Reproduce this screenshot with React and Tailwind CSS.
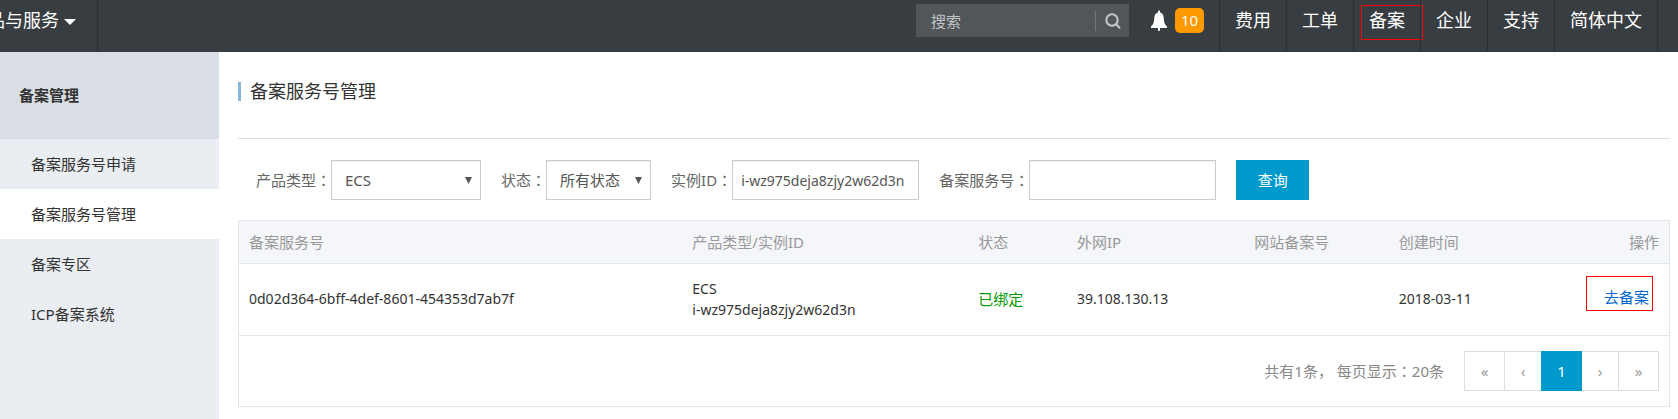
const NAV_ITEMS = ['费用', '工单', '备案', '企业', '支持', '简体中文'];
const SIDE_ITEMS = ['备案服务号申请', '备案服务号管理', '备案专区', 'ICP备案系统'];
const ACTIVE_ITEM = '备案服务号管理';

const RECORDS = [
  {
    id: '0d02d364-6bff-4def-8601-454353d7ab7f',
    product: 'ECS',
    instance: 'i-wz975deja8zjy2w62d3n',
    status: '已绑定',
    ip: '39.108.130.13',
    site: '',
    created: '2018-03-11',
  },
];

// the full-width colon sits in the middle of its cell in the TC face
function Colon() {
  return <span className="font-['Noto_Sans_CJK_TC',sans-serif]">：</span>;
}

function BellIcon() {
  return (
    <svg width="16" height="21" viewBox="0 0 16 21" fill="#fff" aria-hidden="true">
      <path d="M8 0.5c.8 0 1.100.6 1.100 1.400v.5C11.300 3 12.500 4.800 12.700 7.600c.3 4.600.8 6.800 3.300 8.900V18H0v-1.500c2.500-2.100 3-4.300 3.300-8.900C3.500 4.800 4.700 3 6.900 2.400v-.5C6.900 1.100 7.200.5 8 .5z" />
      <path d="M7 18h2v2c0 .5-.4 1-1 1s-1-.5-1-1z" />
    </svg>
  );
}

function SearchIcon() {
  return (
    <svg width="16" height="16" viewBox="0 0 16 16" fill="none" stroke="#c6c9cb" strokeWidth="2" aria-hidden="true">
      <circle cx="7" cy="7" r="5.700" />
      <path d="M11 11l4 4.300" />
    </svg>
  );
}

function TopBar() {
  return (
    <header className="flex h-[52px] items-stretch overflow-hidden bg-[#373d41] text-lg leading-10 text-white">
      <button type="button" className="-ml-[31px] flex h-full shrink-0 items-start border-r border-[#2a2f32] pr-[21px]">
        产品与服务
        <svg width="12" height="6" viewBox="0 0 12 6" fill="#fff" className="mt-[19px] ml-[5px]" aria-hidden="true">
          <path d="M0 0h12L6 6z" />
        </svg>
      </button>

      <div className="ml-auto flex">
        <form role="search" className="mt-1 flex h-[33px] w-[213px] items-center bg-[#50565a]">
          <input
            type="search"
            aria-label="搜索"
            placeholder="搜索"
            className="h-full min-w-0 flex-1 bg-transparent pl-[15px] text-[15px] outline-none placeholder:text-[#c1c4c6]"
          />
          <span className="h-5 w-px bg-[#70767a]" />
          <button type="button" aria-label="搜索" className="flex h-full w-[33px] items-center justify-center">
            <SearchIcon />
          </button>
        </form>

        <div className="mt-2 mr-[15px] ml-[22px] flex h-[25px] items-center gap-2">
          <BellIcon />
          <span className="w-[29px] rounded-[5px] bg-[#ff9900] text-center text-[15px] leading-[25px]">10</span>
        </div>

        <nav className="mr-5 flex border-r border-[#2a2f32]">
          {NAV_ITEMS.map((item) => (
            <a key={item} href="#" className="relative border-l border-[#2a2f32] px-[15px]">
              {item}
              {item === '备案' && (
                <span className="absolute top-[5px] left-[7px] h-[35px] w-[62px] border border-[#f00]" />
              )}
            </a>
          ))}
        </nav>
      </div>
    </header>
  );
}

function Sidebar() {
  return (
    <aside className="w-[219px] shrink-0 bg-[#eaedf1] text-[#333]">
      <h2 className="bg-[#d9dee4] pl-[19px] text-[15px] leading-[87px] font-bold">备案管理</h2>
      <nav>
        {SIDE_ITEMS.map((item) => (
          <a
            key={item}
            href="#"
            className={item === ACTIVE_ITEM ? 'block bg-white pl-[31px] leading-[50px]' : 'block pl-[31px] leading-[50px]'}
          >
            {item}
          </a>
        ))}
      </nav>
    </aside>
  );
}

function Field({ id, label, children }) {
  return (
    <div className="flex items-center">
      <label htmlFor={id} className="text-[#666]">
        {label}
        <Colon />
      </label>
      {children}
    </div>
  );
}

function SelectBox({ id, className, options }) {
  return (
    <div className={`relative ${className}`}>
      <select
        id={id}
        className="h-10 w-full appearance-none border border-[#ccc] bg-white pl-[13px] text-[#555] shadow-[inset_0_1px_1px_rgba(0,0,0,0.075)]"
      >
        {options.map((option) => (
          <option key={option}>{option}</option>
        ))}
      </select>
      <svg
        width="7"
        height="7"
        viewBox="0 0 7 7"
        fill="#555"
        className="pointer-events-none absolute top-[17px] right-[9px]"
        aria-hidden="true"
      >
        <path d="M0 0h7L3.500 7z" />
      </svg>
    </div>
  );
}

function Filters() {
  const box = 'h-10 w-[187px] border border-[#ccc] px-2 text-[#555] shadow-[inset_0_1px_1px_rgba(0,0,0,0.075)]';
  return (
    <form className="flex flex-wrap items-center gap-5 pt-[21px] pb-5 pl-[18px]">
      <Field id="product" label="产品类型">
        <SelectBox id="product" className="w-[150px]" options={['ECS']} />
      </Field>
      <Field id="status" label="状态">
        <SelectBox id="status" className="w-[105px]" options={['所有状态']} />
      </Field>
      <Field id="instance" label="实例ID">
        <input id="instance" type="text" defaultValue="i-wz975deja8zjy2w62d3n" className={`${box} text-sm`} />
      </Field>
      <Field id="service" label="备案服务号">
        <input id="service" type="text" className={box} />
      </Field>
      <button type="button" className="h-10 w-[73px] bg-[#0099cc] text-white">
        查询
      </button>
    </form>
  );
}

function Pagination() {
  return (
    <div className="flex items-center justify-end gap-5 border-t border-[#e1e6eb] px-2.5 py-[15px] text-[#888]">
      <span>共有1条， 每页显示<Colon />20条</span>
      <nav className="flex h-10 border border-[#ddd] text-[#999]">
        <button type="button" aria-label="首页" className="w-10 border-r border-[#ddd]">
          «
        </button>
        <button type="button" aria-label="上一页" className="w-9">
          ‹
        </button>
        <button type="button" className="-my-px w-[41px] bg-[#0099cc] text-white">
          1
        </button>
        <button type="button" aria-label="下一页" className="w-9">
          ›
        </button>
        <button type="button" aria-label="末页" className="w-10 border-l border-[#ddd]">
          »
        </button>
      </nav>
    </div>
  );
}

function RecordTable() {
  return (
    <div className="border border-[#e1e6eb]">
      <table className="w-full table-fixed text-left">
        <thead className="bg-[#f5f6fa] text-[#999]">
          <tr className="h-[42px] border-b border-[#e1e6eb] *:px-2.5 *:font-normal">
            <th className="w-[31%]">备案服务号</th>
            <th className="w-[20%]">产品类型/实例ID</th>
            <th className="w-[6.9%]">状态</th>
            <th className="w-[12.4%]">外网IP</th>
            <th className="w-[10.1%]">网站备案号</th>
            <th>创建时间</th>
            <th className="text-right">操作</th>
          </tr>
        </thead>
        <tbody className="text-[#333]">
          {RECORDS.map((row) => (
            <tr key={row.id} className="h-[72px] *:px-2.5">
              <td className="text-sm">{row.id}</td>
              <td className="text-sm leading-[21px]">
                {row.product}
                <br />
                {row.instance}
              </td>
              <td className="text-[#090]">{row.status}</td>
              <td className="text-sm">{row.ip}</td>
              <td>{row.site}</td>
              <td className="text-sm">{row.created}</td>
              <td className="text-right">
                <a href="#" className="relative mr-2.5 mb-1.5 inline-block leading-5 text-[#06c]">
                  去备案
                  <span className="absolute -top-[11px] -right-1 -left-[18px] h-[35px] border border-[#f00]" />
                </a>
              </td>
            </tr>
          ))}
        </tbody>
      </table>
      <Pagination />
    </div>
  );
}

export default function App() {
  return (
    <div className="flex min-h-screen flex-col bg-white font-['Noto_Sans','Noto_Sans_CJK_SC',sans-serif] text-[15px]">
      <TopBar />
      <div className="flex flex-1">
        <Sidebar />
        <main className="min-w-0 flex-1 pr-2 pl-[19px]">
          <div className="flex h-[87px] items-center border-b border-[#ddd] pb-2">
            <h1 className="border-l-3 border-[#87b6dd] pl-[9px] text-lg leading-[19px] text-[#333]">备案服务号管理</h1>
          </div>
          <Filters />
          <RecordTable />
        </main>
      </div>
    </div>
  );
}
